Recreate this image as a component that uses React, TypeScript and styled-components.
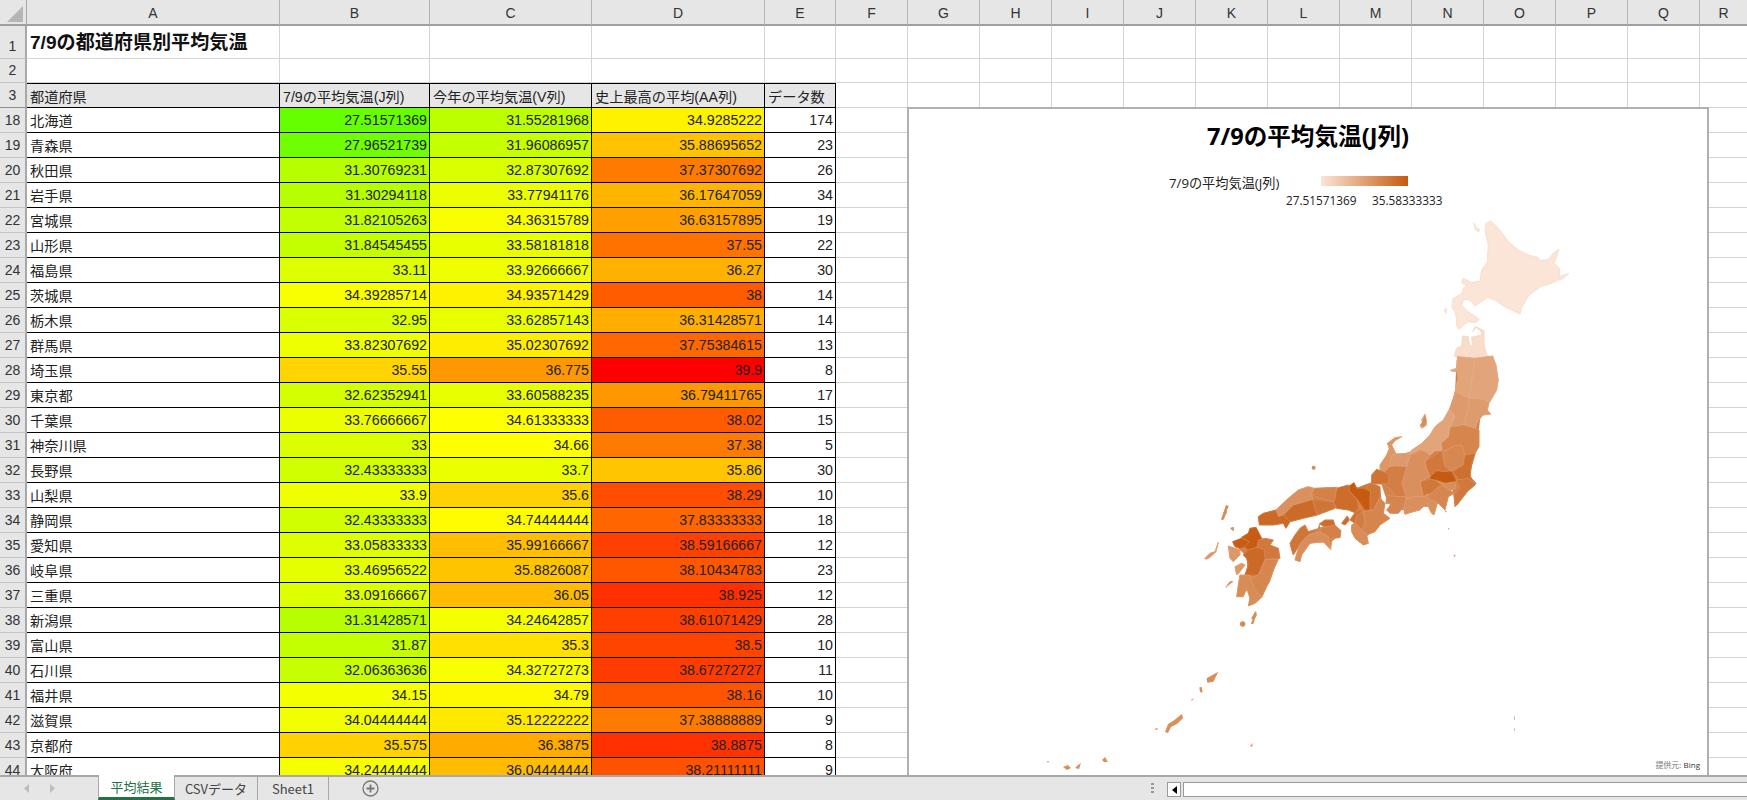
import { Fragment } from "react";
import { createGlobalStyle, styled } from "styled-components";

const GlobalStyle = createGlobalStyle`
  html, body {
    margin: 0;
    padding: 0;
    height: 100%;
    overflow: hidden;
    background: #fff;
  }
  #root {
    height: 100%;
  }
`;

const FONT = `"Liberation Sans", "Noto Sans CJK JP", sans-serif`;

const COLUMNS = ["A", "B", "C", "D", "E", "F", "G", "H", "I", "J", "K", "L", "M", "N", "O", "P", "Q", "R"];
const EMPTY_COLS = COLUMNS.slice(5);

// name, J, V, AA, count (the numbers stay strings: they are shown as is)
const ROWS: [number, string, string, string, string, string][] = [
  [18, "北海道", "27.51571369", "31.55281968", "34.9285222", "174"],
  [19, "青森県", "27.96521739", "31.96086957", "35.88695652", "23"],
  [20, "秋田県", "31.30769231", "32.87307692", "37.37307692", "26"],
  [21, "岩手県", "31.30294118", "33.77941176", "36.17647059", "34"],
  [22, "宮城県", "31.82105263", "34.36315789", "36.63157895", "19"],
  [23, "山形県", "31.84545455", "33.58181818", "37.55", "22"],
  [24, "福島県", "33.11", "33.92666667", "36.27", "30"],
  [25, "茨城県", "34.39285714", "34.93571429", "38", "14"],
  [26, "栃木県", "32.95", "33.62857143", "36.31428571", "14"],
  [27, "群馬県", "33.82307692", "35.02307692", "37.75384615", "13"],
  [28, "埼玉県", "35.55", "36.775", "39.9", "8"],
  [29, "東京都", "32.62352941", "33.60588235", "36.79411765", "17"],
  [30, "千葉県", "33.76666667", "34.61333333", "38.02", "15"],
  [31, "神奈川県", "33", "34.66", "37.38", "5"],
  [32, "長野県", "32.43333333", "33.7", "35.86", "30"],
  [33, "山梨県", "33.9", "35.6", "38.29", "10"],
  [34, "静岡県", "32.43333333", "34.74444444", "37.83333333", "18"],
  [35, "愛知県", "33.05833333", "35.99166667", "38.59166667", "12"],
  [36, "岐阜県", "33.46956522", "35.8826087", "38.10434783", "23"],
  [37, "三重県", "33.09166667", "36.05", "38.925", "12"],
  [38, "新潟県", "31.31428571", "34.24642857", "38.61071429", "28"],
  [39, "富山県", "31.87", "35.3", "38.5", "10"],
  [40, "石川県", "32.06363636", "34.32727273", "38.67272727", "11"],
  [41, "福井県", "34.15", "34.79", "38.16", "10"],
  [42, "滋賀県", "34.04444444", "35.12222222", "37.38888889", "9"],
  [43, "京都府", "35.575", "36.3875", "38.8875", "8"],
  [44, "大阪府", "34.24444444", "36.04444444", "38.21111111", "9"],
];

// the sheet's three colour scale, green through yellow to red
const heat = (v: number) => {
  const mid = 34.66;
  if (v <= mid) {
    const r = Math.round((255 * Math.max(0, v - 22.75)) / (mid - 22.75));
    return `rgb(${r},255,0)`;
  }
  const g = Math.round(255 * (1 - (v - mid) / (39.9 - mid)));
  return `rgb(255,${g},0)`;
};

// the map's two colour scale
const shade = (v: number) => {
  const t = Math.min(1, Math.max(0, (v - 27.5157) / (35.5833 - 27.5157)));
  const mix = (a: number, b: number) => Math.round(a + (b - a) * t);
  return `rgb(${mix(251, 197)},${mix(229, 90)},${mix(214, 17)})`;
};

const Page = styled.div`
  display: flex;
  flex-direction: column;
  width: 1747px;
  height: 800px;
  overflow: hidden;
  font-family: ${FONT};
  color: #222;
`;

const SheetArea = styled.div`
  position: relative;
  height: 775px;
  overflow: hidden;
`;

const Grid = styled.div`
  display: grid;
  grid-template-columns: 27px 253px 150px 162px 173px 71px repeat(12, 72px) 48px;
  grid-template-rows: 26px 33px 24px 25px;
  grid-auto-rows: 25px;
`;

const Corner = styled.div`
  background: #e6e6e6;
  border-right: 1px solid #a8a8a8;
  border-bottom: 2px solid #9f9f9f;
  box-sizing: border-box;
  display: flex;
  align-items: flex-end;
  justify-content: flex-end;
  padding: 0 3px 2px 0;
  &::after {
    content: "";
    width: 0;
    height: 0;
    border-style: solid;
    border-width: 0 0 16px 16px;
    border-color: transparent transparent #b5b5b5 transparent;
  }
`;

const ColHead = styled.div`
  background: #e6e6e6;
  border-right: 1px solid #b4b4b4;
  border-bottom: 2px solid #9f9f9f;
  box-sizing: border-box;
  display: flex;
  align-items: center;
  justify-content: center;
  padding-top: 1px;
  font-size: 14px;
  color: #333;
`;

const RowHead = styled.div<{ $split?: boolean }>`
  background: #e6e6e6;
  border-right: 2px solid #a8a8a8;
  border-bottom: 1px solid ${(p) => (p.$split ? "#8e8e8e" : "#c4c4c4")};
  box-sizing: border-box;
  display: flex;
  align-items: flex-end;
  justify-content: center;
  padding-bottom: 4px;
  font-size: 14px;
  color: #333;
`;

const Blank = styled.div`
  border-right: 1px solid #d4d4d4;
  border-bottom: 1px solid #d4d4d4;
  box-sizing: border-box;
`;

const TitleCell = styled(Blank)`
  display: flex;
  align-items: center;
  padding: 0 0 2px 3px;
  font-size: 19.1px;
  font-weight: 700;
  color: #111;
  white-space: nowrap;
`;

const Cell = styled.div<{ $fill?: string; $right?: boolean }>`
  background: ${(p) => p.$fill ?? "#fff"};
  border-right: 1px solid #000;
  border-bottom: 1px solid #000;
  box-sizing: border-box;
  display: flex;
  align-items: center;
  justify-content: ${(p) => (p.$right ? "flex-end" : "flex-start")};
  padding: 0 2px 0 3px;
  font-size: 14.2px;
  color: #222;
  white-space: nowrap;
  overflow: hidden;
`;

const HeadCell = styled(Cell)`
  background: #e7e6e6;
  border-top: 1px solid #000;
`;

const ChartPanel = styled.div`
  position: absolute;
  left: 907px;
  top: 107px;
  width: 802px;
  height: 668px;
  box-sizing: border-box;
  background: #fff;
  border-left: 2px solid #b0b0b0;
  border-top: 2px solid #b0b0b0;
  border-right: 2px solid #b0b0b0;
  display: flex;
  flex-direction: column;
  font-family: "Open Sans", "Noto Sans CJK JP", sans-serif;
  overflow: hidden;
`;

const ChartTitle = styled.div`
  height: 54px;
  display: flex;
  align-items: center;
  justify-content: center;
  padding-bottom: 2px;
  box-sizing: border-box;
  font-size: 23.600px;
  font-weight: 700;
  color: #000;
`;

const Legend = styled.div`
  display: grid;
  grid-template-columns: 117px 70px 16px 70px;
  grid-template-rows: 29px 16px;
  margin-left: 260px;
  font-size: 11.8px;
  color: #222;
  height: 46px;
`;

const LegendName = styled.div`
  grid-row: 1;
  grid-column: 1;
  align-self: end;
  font-size: 13.2px;
  line-height: 17px;
  white-space: nowrap;
`;

const LegendBar = styled.div`
  grid-row: 1;
  grid-column: 2 / 5;
  justify-self: center;
  align-self: start;
  margin-top: 13px;
  width: 87px;
  height: 10px;
  background: linear-gradient(90deg, #fbe5d6, #c55a11);
`;

const LegendValue = styled.div<{ $col: number }>`
  grid-row: 2;
  grid-column: ${(p) => p.$col};
  line-height: 16px;
  white-space: nowrap;
`;

const MapArt = styled.svg`
  display: block;
  flex: 1;
  min-height: 0;
  width: 100%;
`;

const Credit = styled.div`
  position: absolute;
  right: 7px;
  bottom: 5px;
  font-size: 8px;
  color: #777;
  b {
    color: #333;
    font-weight: 400;
  }
`;

const TabBar = styled.div`
  display: flex;
  align-items: stretch;
  height: 25px;
  box-sizing: border-box;
  background: #e6e6e6;
  border-top: 2px solid #a8a8a8;
  font-size: 13px;
  color: #444;
`;

const NavArrows = styled.div`
  width: 98px;
  display: flex;
  align-items: center;
  gap: 19px;
  padding-left: 24px;
  box-sizing: border-box;
`;

const Tab = styled.div<{ $active?: boolean; $w: number }>`
  width: ${(p) => p.$w}px;
  display: flex;
  align-items: center;
  justify-content: center;
  box-sizing: border-box;
  margin-top: ${(p) => (p.$active ? "-2px" : "0")};
  background: ${(p) => (p.$active ? "#fff" : "transparent")};
  color: ${(p) => (p.$active ? "#217346" : "#444")};
  border-left: ${(p) => (p.$active ? "1px solid #a8a8a8" : "none")};
  border-right: 1px solid #a8a8a8;
  border-bottom: ${(p) => (p.$active ? "3px solid #217346" : "none")};
  font-family: "Noto Sans CJK JP", "Liberation Sans", sans-serif;
`;

const AddSheet = styled.div`
  margin-left: 33px;
  align-self: center;
  display: flex;
  color: #777;
`;

const TabSpacer = styled.div`
  flex: 1;
`;

const Grip = styled.div`
  width: 3px;
  height: 11px;
  align-self: center;
  margin-right: 13px;
  background: repeating-linear-gradient(#999 0 2px, transparent 2px 4px);
`;

const ScrollBar = styled.div`
  width: 580px;
  height: 15px;
  margin: 5px 0 0;
  display: flex;
  gap: 2px;
`;

const ScrollButton = styled.div`
  width: 14px;
  box-sizing: border-box;
  background: #fff;
  border: 1px solid #9a9a9a;
  display: flex;
  align-items: center;
  justify-content: center;
`;

const ScrollTrack = styled.div`
  flex: 1;
  background: #fff;
  border: 1px solid #9a9a9a;
  border-right: none;
`;

type Shape = { v: number; d: string };

// traced from the map, in 3x crop coordinates, one list per crop origin
const NORTH: Shape[] = [
  {
    v: 27.52,
    d: "M272 3L300 30 325 65 355 90 385 105 413 112 420 122 445 118 460 100 477 87 470 110 462 128 478 145 478 170 507 160 490 175 470 182 450 192 425 198 405 212 385 228 365 262 360 282 335 270 310 258 285 240 262 232 245 245 225 258 215 245 205 238 190 240 185 255 200 272 220 285 237 298 228 308 205 305 190 315 178 328 170 318 170 295 165 275 155 262 160 235 185 222 190 205 200 198 185 188 190 175 215 188 240 183 245 150 262 125 265 75 255 30 258 10ZM222 10L228 22 240 30 235 36 225 28ZM132 270L140 265 138 280Z",
  },
  {
    v: 27.97,
    d: "M163 408L170 385 185 378 188 348 205 350 208 375 218 378 215 352 245 345 243 333 228 322 218 335 226 320 252 332 252 375 260 405 268 410 245 412 230 428 222 420 200 408 180 412Z",
  },
];

const EAST_LAND = "M230 60L340 60 345 130 320 180 300 240 290 330 270 400 280 430 240 450 225 490 215 440 190 480 160 500 120 500 75 510 40 510 20 480 0 420 15 395 35 350 90 335 150 290 200 230 225 155Z";

const EAST: Shape[] = [
  { v: 31.31, d: "M232 50L285 55 280 100 272 140 268 175 245 165 225 155 235 115 232 95 210 92 220 88 232 85Z" },
  { v: 31.3, d: "M285 55L338 48 348 75 355 120 350 150 330 185 310 178 268 175 272 140 280 100Z" },
  { v: 31.85, d: "M225 155L268 175 265 210 250 255 225 262 210 262 225 230 208 208 218 190Z" },
  { v: 31.82, d: "M268 175L310 178 328 185 322 210 332 222 310 225 295 240 285 265 250 255 265 210Z" },
  { v: 33.11, d: "M210 262L250 255 285 265 297 270 297 320 285 340 255 345 245 315 222 318 190 335 183 310 205 290Z" },
  { v: 31.31, d: "M208 208L190 240 165 260 150 285 120 315 95 330 85 345 120 330 135 332 150 345 165 332 185 332 183 310 205 290 210 262 225 230ZM125 240L135 222 138 240 140 255 125 265 120 255 130 250Z" },
  { v: 32.95, d: "M190 335L222 318 245 315 255 345 250 375 225 385 212 392 195 380Z" },
  { v: 33.82, d: "M135 365L165 345 185 332 195 380 212 392 190 395 170 392 150 410 140 385Z" },
  { v: 34.39, d: "M255 345L285 340 275 370 270 410 288 430 265 415 240 425 220 395 250 375Z" },
  { v: 35.55, d: "M150 410L170 392 190 395 215 395 230 425 195 430 170 420 152 418Z" },
  { v: 32.62, d: "M165 422L195 430 225 425 228 445 210 450 185 435Z" },
  { v: 33.77, d: "M228 420L265 415 288 432 262 455 235 490 225 500 222 465 240 445Z" },
  { v: 33.0, d: "M170 445L185 435 210 450 222 460 205 470 195 510 175 490 150 480 135 465Z" },
  { v: 33.9, d: "M120 425L150 418 170 422 185 435 170 445 150 462 130 470Z" },
  { v: 32.43, d: "M80 475L100 470 130 470 150 462 135 465 155 480 172 490 162 525 155 520 140 490 120 510 100 515 75 523 70 500Z" },
  { v: 32.43, d: "M90 345L120 330 135 335 150 345 135 365 140 385 150 410 120 425 130 470 100 470 80 475 65 430 80 380Z" },
  { v: 31.87, d: "M35 345L45 342 85 340 90 345 80 380 30 380 28 360Z" },
  { v: 32.06, d: "M22 310L45 293 65 290 45 302 35 315 48 342 35 345 28 380 10 400 0 395 0 375 20 345 28 325Z" },
  { v: 33.47, d: "M28 380L50 378 80 380 65 430 78 470 50 470 30 445 0 425 10 400Z" },
  { v: 33.06, d: "M20 465L50 470 78 470 72 500 55 520 30 520 20 510 35 490 18 490Z" },
];

const WEST_LAND = "M330 85L420 80 430 160 400 210 370 240 345 225 340 190 350 150 285 145 235 160 150 180 135 190 65 190 60 170 110 150 170 100 220 90 290 90ZM175 260L200 215 280 190 298 225 270 250 210 245 185 280Z";

const WEST: Shape[] = [
  { v: 34.15, d: "M350 85L395 68 395 45 410 28 445 42 445 70 420 72 395 72 375 85Z" },
  { v: 35.58, d: "M325 80L342 68 350 85 375 85 392 95 390 120 390 150 375 150 355 120 330 95Z" },
  { v: 34.04, d: "M375 85L395 70 420 80 420 110 400 150 390 150 390 120 392 95Z" },
  { v: 33.09, d: "M400 150L420 115 435 130 430 160 450 175 420 195 405 215 380 225 365 210 375 185 370 155 390 152Z" },
  { v: 33.6, d: "M370 155L375 185 365 210 345 190 350 165Z" },
  { v: 34.24, d: "M345 158L358 150 370 155 350 165 345 190 330 180Z" },
  { v: 32.7, d: "M335 195L345 190 365 210 380 225 385 250 370 255 345 235 335 215Z" },
  { v: 34.5, d: "M280 125L290 85 325 75 330 95 350 118 355 145 345 158 325 150 290 145ZM305 190L322 168 328 180 315 195Z" },
  { v: 33.4, d: "M215 100L222 85 290 82 285 120 280 125 230 112Z" },
  { v: 34.0, d: "M218 118L280 125 285 145 232 165 225 145Z" },
  { v: 34.6, d: "M130 165L160 135 218 118 225 145 232 165 190 175 150 185Z" },
  { v: 32.4, d: "M108 150L145 115 175 90 205 80 222 85 215 100 218 118 160 135 130 165 115 170Z" },
  { v: 34.7, d: "M55 170L70 160 108 150 115 170 130 165 150 185 138 205 130 190 100 195 70 195 58 195Z" },
  { v: 34.4, d: "M238 192L255 180 280 180 285 198 255 200Z" },
  { v: 33.3, d: "M240 215L240 205 285 195 303 212 300 233 275 235 272 268 265 230Z" },
  { v: 34.0, d: "M150 250L165 225 180 205 195 195 205 215 235 208 238 195 240 208 205 225 185 245 160 285 155 270Z" },
  { v: 32.6, d: "M165 300L178 255 205 225 240 215 265 230 272 268 250 245 210 250 185 285 180 305Z" },
];

const KYUSHU_LAND = "M130 100L190 60 210 90 260 120 262 150 240 215 212 255 180 275 175 240 160 250 150 200 170 190 172 150 160 130Z";

const KYUSHU: Shape[] = [
  { v: 35.5, d: "M155 82L175 70 180 55 198 52 215 85 200 112 175 120 165 110 178 95Z" },
  { v: 35.5, d: "M128 95L155 85 178 95 165 110 150 115 135 110Z" },
  { v: 33.8, d: "M200 112L205 90 225 85 250 90 240 105 265 115 270 145 225 148 215 118Z" },
  { v: 34.7, d: "M175 120L200 112 222 118 225 148 205 195 165 195 175 165 170 145 160 135Z" },
  { v: 32.0, d: "M115 108L135 115 150 120 150 135 130 155 120 145ZM135 170L155 160 165 165 150 185 140 195ZM95 28L105 0 110 5 100 28ZM45 145L60 130 75 125 85 97 78 125 60 142 48 148Z" },
  { v: 33.0, d: "M225 148L265 148 250 180 235 220 215 262 195 240 180 205 205 195Z" },
  { v: 32.7, d: "M150 195L180 197 195 240 215 262 195 280 175 288 180 265 170 235 160 260 140 260 145 225Z" },
  { v: 32.7, d: "M122 55L130 52 130 62ZM185 325L197 305 199 315 192 328ZM108 232L120 215 128 215 115 225Z" },
];

// small southern islands, in 3x crop coordinates of the wide map crop
const ISLANDS: Shape[] = [
  { v: 32.7, d: "M303 672L315 635 318 645 310 672ZM170 835L205 815 190 845 172 848ZM148 862L155 862 158 878 150 876ZM812 75L825 45 830 60 822 82ZM884 332L890 332 888 338ZM893 385L898 385 896 390ZM910 463L918 467 913 470ZM214 358L228 315 236 318 220 358Z" },
];

const WIDE_SPOTS = [
  { cx: 278, cy: 672, r: 8 },
  { cx: 491, cy: 203, r: 6 },
];

// own-colour outline first so neighbouring shapes close up, thin pale border last
const drawShapes = (list: Shape[], land?: string) => (
  <>
    {land && <path d={land} fill={shade(33.2)} />}
    {list.map((s, i) => (
      <path key={i} d={s.d} fill={shade(s.v)} stroke={shade(s.v)} strokeWidth={3} strokeLinejoin="round" />
    ))}
    {list.map((s, i) => (
      <path key={i} d={s.d} fill={shade(s.v)} stroke="#f0c9ab" strokeOpacity={0.6} strokeWidth={1} strokeLinejoin="round" />
    ))}
  </>
);

// Okinawa and the far islands, in page coordinates
const OKINAWA =
  "M1165 732L1168 724 1173 721 1182 714 1183 718 1177 724 1171 727 1168 733ZM1191 700L1194 698 1192 701ZM1200 689L1202 687 1202 692 1200 692ZM1154 729L1158 728 1157 730ZM1250 746L1253 743 1252 747ZM1063 767L1068 765 1071 768 1067 770ZM1075 768L1078 765 1081 763 1079 769ZM1102 760L1105 757 1108 762 1104 762ZM1047 761L1049 761 1048 763ZM1514 715L1515 719 1514 720ZM1514 727L1515 730 1514 731Z";

const App = () => (
  <>
    <GlobalStyle />
    <Page>
      <SheetArea>
        <Grid>
          <Corner />
          {COLUMNS.map((c) => (
            <ColHead key={c}>{c}</ColHead>
          ))}

          <RowHead>1</RowHead>
          <TitleCell>7/9の都道府県別平均気温</TitleCell>
          {COLUMNS.slice(1).map((c) => (
            <Blank key={c} />
          ))}

          <RowHead>2</RowHead>
          {COLUMNS.map((c) => (
            <Blank key={c} />
          ))}

          <RowHead $split>3</RowHead>
          <HeadCell>都道府県</HeadCell>
          <HeadCell>7/9の平均気温(J列)</HeadCell>
          <HeadCell>今年の平均気温(V列)</HeadCell>
          <HeadCell>史上最高の平均(AA列)</HeadCell>
          <HeadCell>データ数</HeadCell>
          {EMPTY_COLS.map((c) => (
            <Blank key={c} />
          ))}

          {ROWS.map(([n, name, j, v, aa, count]) => (
            <Fragment key={n}>
              <RowHead>{n}</RowHead>
              <Cell>{name}</Cell>
              <Cell $right $fill={heat(Number(j))}>{j}</Cell>
              <Cell $right $fill={heat(Number(v))}>{v}</Cell>
              <Cell $right $fill={heat(Number(aa))}>{aa}</Cell>
              <Cell $right>{count}</Cell>
              {EMPTY_COLS.map((c) => (
                <Blank key={c} />
              ))}
            </Fragment>
          ))}
        </Grid>

        <ChartPanel>
          <ChartTitle>7/9の平均気温(J列)</ChartTitle>
          <Legend>
            <LegendName>7/9の平均気温(J列)</LegendName>
            <LegendBar />
            <LegendValue $col={2}>27.51571369</LegendValue>
            <LegendValue $col={4}>35.58333333</LegendValue>
          </Legend>
          <MapArt viewBox="909 209 798 566" preserveAspectRatio="xMinYMin meet">
            <g transform="translate(1400 220) scale(.3333)">{drawShapes(NORTH)}</g>
            <g transform="translate(1380 340) scale(.3333)">{drawShapes(EAST, EAST_LAND)}</g>
            <g transform="translate(1240 460) scale(.3333)">{drawShapes(WEST, WEST_LAND)}</g>
            <g transform="translate(1190 510) scale(.3333)">{drawShapes(KYUSHU, KYUSHU_LAND)}</g>
            <g transform="translate(1150 400) scale(.3333)">
              {ISLANDS.map((s, i) => (
                <path key={i} d={s.d} fill={shade(s.v)} />
              ))}
              {WIDE_SPOTS.map((s) => (
                <circle key={s.cx} {...s} fill={shade(32.9)} />
              ))}
            </g>
            <path d={OKINAWA} fill={shade(32.5)} />
          </MapArt>
          <Credit>
            提供元: <b>Bing</b>
          </Credit>
        </ChartPanel>
      </SheetArea>

      <TabBar>
        <NavArrows>
          <svg width="6" height="9" viewBox="0 0 6 9">
            <path d="M5 0v9L0 4.500z" fill="#bcbcbc" />
          </svg>
          <svg width="6" height="9" viewBox="0 0 6 9">
            <path d="M1 0v9l5-4.500z" fill="#bcbcbc" />
          </svg>
        </NavArrows>
        <Tab $active $w={77}>平均結果</Tab>
        <Tab $w={83}>CSVデータ</Tab>
        <Tab $w={71}>Sheet1</Tab>
        <AddSheet>
          <svg width="17" height="17" viewBox="0 0 17 17" fill="none" stroke="currentColor">
            <circle cx="8.500" cy="8.500" r="7.500" strokeWidth="1.300" />
            <path d="M8.500 4.500v8M4.500 8.500h8" strokeWidth="1.800" />
          </svg>
        </AddSheet>
        <TabSpacer />
        <Grip />
        <ScrollBar>
          <ScrollButton>
            <svg width="5" height="8" viewBox="0 0 5 8">
              <path d="M5 0v8L0 4z" fill="#000" />
            </svg>
          </ScrollButton>
          <ScrollTrack />
        </ScrollBar>
      </TabBar>
    </Page>
  </>
);

export default App;
